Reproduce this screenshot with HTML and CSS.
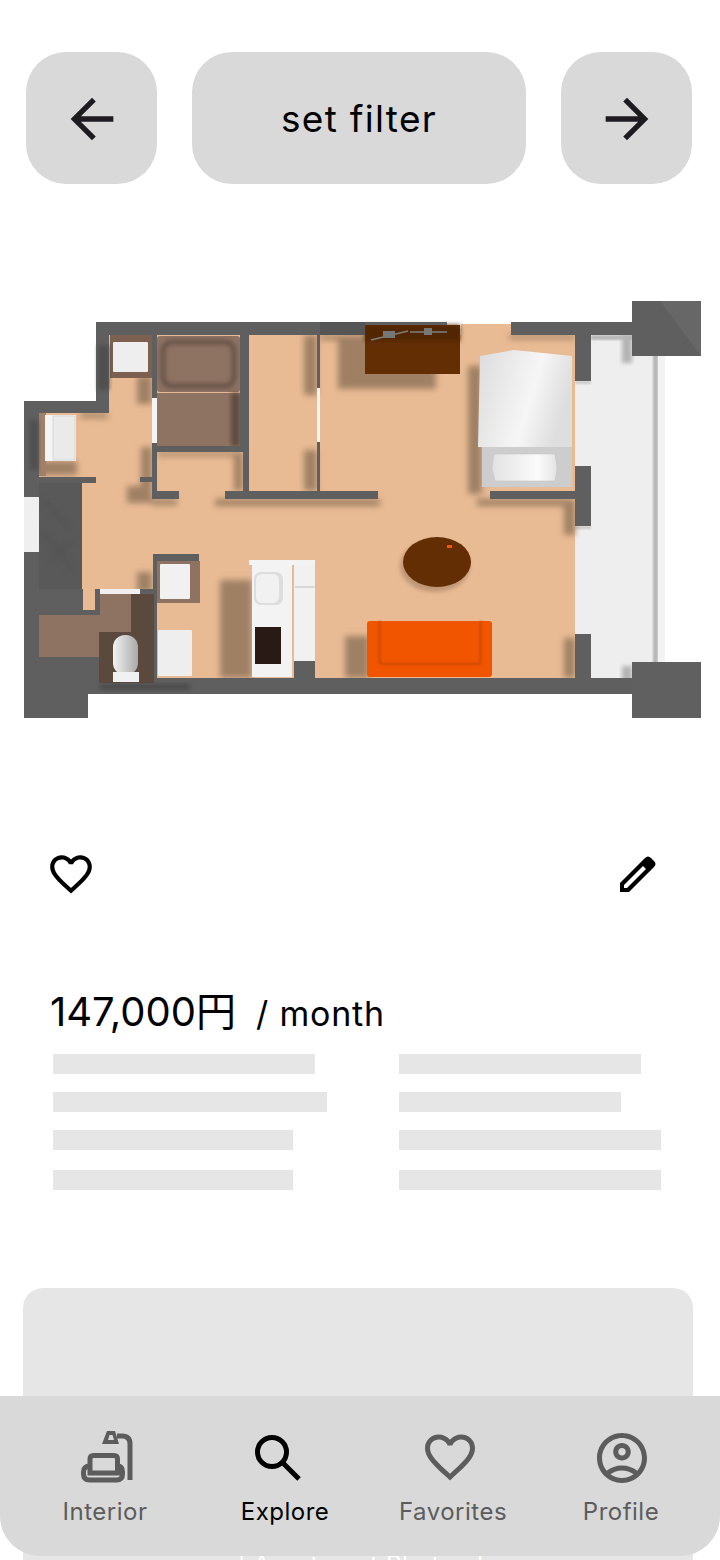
FILE: index.html
```html
<!DOCTYPE html>
<html lang="en">
<head>
<meta charset="utf-8">
<title>Explore</title>
<link rel="stylesheet" href="styles.css">
</head>
<body>
<div class="app">
  <header class="top">
    <button class="btn btn-square" aria-label="Back">
      <svg class="arrow" viewBox="0 0 24 24"><path d="M20 11H7.83l5.59-5.59L12 4l-8 8 8 8 1.41-1.41L7.83 13H20v-2z"/></svg>
    </button>
    <button class="btn btn-wide">set filter</button>
    <button class="btn btn-square" aria-label="Next">
      <svg class="arrow" viewBox="0 0 24 24"><path d="M12 4l-1.41 1.41L16.17 11H4v2h12.17l-5.58 5.59L12 20l8-8z"/></svg>
    </button>
  </header>

  <svg class="plan" viewBox="0 290 720 440" role="img" aria-label="Floor plan">
    <defs>
      <filter id="b3" x="-40%" y="-40%" width="180%" height="180%"><feGaussianBlur stdDeviation="3"/></filter>
      <filter id="b2" x="-30%" y="-30%" width="160%" height="160%"><feGaussianBlur stdDeviation="2"/></filter>
      <filter id="b1" x="-20%" y="-20%" width="140%" height="140%"><feGaussianBlur stdDeviation="0.8"/></filter>
      <linearGradient id="bedg" x1="0" x2="1" y1="0" y2="0.3"><stop offset="0" stop-color="#dcdcdc"/><stop offset="0.65" stop-color="#f6f6f6"/><stop offset="1" stop-color="#dedede"/></linearGradient>
      <linearGradient id="pillow" x1="0" x2="1"><stop offset="0" stop-color="#e2e2e2"/><stop offset="0.7" stop-color="#fbfbfb"/><stop offset="1" stop-color="#e4e4e4"/></linearGradient>
      <linearGradient id="toilet" x1="0" x2="1"><stop offset="0" stop-color="#f2f2f2"/><stop offset="1" stop-color="#a9a9a9"/></linearGradient>
    </defs>

    <!-- balcony -->
    <rect x="575" y="335" width="90" height="349" fill="#eeeeee"/>
    <rect x="653" y="345" width="5" height="325" fill="#b5b5b5" filter="url(#b1)"/>
    <rect x="658" y="356" width="7" height="306" fill="#f3f3f3"/>
    <rect x="591" y="335" width="62" height="5" fill="#b8b8b8" filter="url(#b1)"/>
    <rect x="622" y="335" width="10" height="28" fill="#b3b3b3" filter="url(#b2)"/>
    <rect x="622" y="666" width="10" height="16" fill="#b3b3b3" filter="url(#b2)"/>
    <rect x="575" y="381" width="16" height="3" fill="#c9c9c9" filter="url(#b1)"/>
    <rect x="575" y="526" width="16" height="3" fill="#c9c9c9" filter="url(#b1)"/>

    <!-- floor -->
    <path fill="#e9bb94" d="M109 335H575V678H157V590H82V483H39V413H109Z"/>
    <rect x="461" y="324" width="50" height="12" fill="#e9bb94"/>
    <rect x="83" y="589" width="14" height="22" fill="#e9bb94"/>

    <!-- cast shadows -->
    <g fill="#9f8064" filter="url(#b3)">
      <rect x="137" y="376" width="15" height="28"/>
      <rect x="141" y="447" width="11" height="56"/>
      <rect x="127" y="486" width="25" height="17"/>
      <rect x="304" y="335" width="13" height="60"/>
      <rect x="304" y="450" width="13" height="41"/>
      <rect x="234" y="452" width="9" height="39"/>
      <rect x="157" y="452" width="86" height="4"/>
      <rect x="215" y="499" width="165" height="7"/>
      <rect x="152" y="499" width="25" height="6"/>
      <rect x="338" y="335" width="98" height="54"/>
      <rect x="468" y="366" width="14" height="128"/>
      <rect x="477" y="499" width="98" height="7"/>
      <rect x="564" y="499" width="11" height="36"/>
      <rect x="564" y="638" width="11" height="40"/>
      <rect x="345" y="636" width="24" height="42"/>
      <rect x="137" y="572" width="15" height="20"/>
      <rect x="220" y="580" width="32" height="98"/>
      <rect x="320" y="335" width="18" height="5"/>
      <rect x="509" y="335" width="66" height="4"/>
      <rect x="39" y="461" width="38" height="14"/>
      <rect x="80" y="413" width="28" height="5"/>
    </g>
    <rect x="39" y="413" width="7" height="63" fill="#a08066"/>
    <ellipse cx="435" cy="566" rx="35" ry="26" fill="#bd9674" filter="url(#b2)"/>

    <!-- entry stone, windows -->
    <rect x="39" y="483" width="43" height="106" fill="#595959"/>
    <path d="M45 500l25 30M50 560l25-20M42 530l30 40" stroke="#525252" stroke-width="4" fill="none" filter="url(#b3)"/>
    <rect x="24" y="497" width="15" height="55" fill="#efefef"/>

    <!-- wardrobe & sink -->
    <rect x="110" y="335" width="42" height="43" fill="#7c6150"/>
    <rect x="113" y="342" width="35" height="30" rx="1" fill="#eeeeee"/>
    <rect x="45" y="415" width="31" height="46" fill="#f4f4f4"/>
    <rect x="53" y="416" width="22" height="44" fill="#eaeaea" stroke="#d6d6d6"/>

    <!-- bath -->
    <rect x="157" y="336" width="83" height="56" rx="3" fill="#8e7262"/>
    <rect x="163" y="342" width="71" height="44" rx="9" fill="none" stroke="#67524a" stroke-width="5" filter="url(#b2)"/>
    <rect x="157" y="393" width="83" height="53" fill="#8e7262"/>
    <rect x="231" y="393" width="9" height="53" fill="#5f4b3f" filter="url(#b2)"/>

    <!-- washroom -->
    <rect x="99" y="594" width="55" height="89" fill="#5c493e"/>
    <rect x="39" y="615" width="60" height="42" fill="#8e7262"/>
    <rect x="99" y="594" width="32" height="38" fill="#8e7262"/>
    <rect x="113" y="635" width="25" height="40" rx="12" fill="url(#toilet)"/>
    <rect x="113" y="672" width="26" height="10" fill="#f1f1f1"/>
    <rect x="100" y="589" width="40" height="5" fill="#f0f0f0"/>

    <!-- storage & laundry -->
    <rect x="157" y="561" width="43" height="42" fill="#8e7262"/>
    <rect x="160" y="564" width="30" height="35" rx="1" fill="#f1f1f1"/>
    <rect x="158" y="630" width="34" height="46" rx="1" fill="#eeeeee"/>

    <!-- kitchen -->
    <rect x="249" y="560" width="66" height="5" fill="#f3f3f3"/>
    <rect x="252" y="565" width="40" height="112" fill="#f3f3f3"/>
    <rect x="294" y="565" width="21" height="96" fill="#f1f1f1"/>
    <rect x="295" y="586" width="20" height="2" fill="#d8d8d8"/>
    <rect x="254" y="572" width="29" height="33" rx="7" fill="#dddddd"/>
    <rect x="256" y="574" width="23" height="29" rx="6" fill="#f1f1f1"/>
    <rect x="255" y="627" width="26" height="37" fill="#2a1a15"/>

    <!-- furniture -->
    <rect x="365" y="325" width="95" height="49" fill="#642e05"/>
    <rect x="365" y="325" width="95" height="16" fill="#512504" filter="url(#b2)"/>
    <path d="M371 340L408 331M410 332H447" stroke="#7d7d7d" stroke-width="1.5" fill="none"/>
    <rect x="383" y="331" width="12" height="7" fill="#777"/>
    <rect x="424" y="328" width="8" height="7" fill="#777"/>

    <path d="M482 487V447H572V487Z" fill="#cdcdcd"/>
    <path d="M480 356L514 350L572 356V447H478Z" fill="url(#bedg)"/>
    <path d="M494 454H555L557 468L555 481H495L492 468Z" fill="url(#pillow)" stroke="#c8c8c8" stroke-width="0.6"/>

    <ellipse cx="437" cy="562" rx="34" ry="25" fill="#642e05"/>
    <rect x="447" y="545" width="5" height="3" fill="#f25500"/>

    <rect x="367" y="621" width="125" height="56" rx="3" fill="#f25500"/>
    <path d="M379.500 621V661Q379.500 664 383 664H478Q480.500 664 480.500 661V621" fill="none" stroke="#c54805" stroke-width="2" filter="url(#b1)"/>

    <!-- walls -->
    <path fill="#5f5f5f" fill-rule="evenodd" d="M96 322H447V325H320V335H249V491H317V335H320V491H378V499H225V491H243V452H157V491H179V499H152V477H140V482H152V398H157V446H240V335H157V398H152V335H109V413H39V477H96V483H39V497H24V401H96Z"/>
    <path fill="#5f5f5f" d="M511 322H632V335H591V381H575V335H511Z"/>
    <rect x="575" y="466" width="16" height="60" fill="#5f5f5f"/>
    <rect x="490" y="491" width="85" height="8" fill="#5f5f5f"/>
    <rect x="575" y="634" width="16" height="44" fill="#5f5f5f"/>
    <path fill="#5f5f5f" d="M24 552H39V589H83V610H95V589H100V594H140V589H153V554H199V561H157V678H294V661H315V678H632V694H88V718H24ZM39 615V657H99V683H154V594H100V615Z"/>
    <rect x="317" y="442" width="3" height="49" fill="#5f5f5f"/>
    <rect x="317" y="388" width="3" height="54" fill="#f4f4f4"/>
    <rect x="152" y="398" width="5" height="45" fill="#f4f4f4"/>
    <rect x="320" y="322" width="45" height="13" fill="#555555"/>
    <rect x="98" y="345" width="11" height="45" fill="#4f4f4f" filter="url(#b2)"/>
    <rect x="30" y="420" width="8" height="50" fill="#4f4f4f" filter="url(#b2)"/>
    <rect x="100" y="684" width="90" height="6" fill="#4c4c4c" filter="url(#b2)"/>
    <rect x="632" y="301" width="69" height="55" fill="#5f5f5f"/>
    <path d="M660 301H701V356Z" fill="#676767"/>
    <rect x="632" y="662" width="69" height="56" fill="#606060"/>
    <rect x="591" y="684" width="41" height="10" fill="#5f5f5f"/>
  </svg>

  <div class="actions">
    <svg class="icon-heart" viewBox="0 0 24 24"><path d="M16.500 3c-1.740 0-3.410.810-4.500 2.090C10.910 3.810 9.240 3 7.500 3 4.420 3 2 5.420 2 8.500c0 3.780 3.400 6.860 8.550 11.540L12 21.350l1.450-1.320C18.600 15.360 22 12.280 22 8.500 22 5.420 19.580 3 16.500 3zm-4.400 15.550l-.1.100-.1-.100C7.140 14.240 4 11.390 4 8.500 4 6.500 5.500 5 7.500 5c1.540 0 3.040.990 3.570 2.360h1.870C13.460 5.990 14.960 5 16.500 5c2 0 3.500 1.500 3.500 3.500 0 2.890-3.140 5.740-7.900 10.050z"/></svg>
    <svg class="icon-edit" viewBox="0 0 44 44"><path fill-rule="evenodd" d="M4 40V31L29 6Q32 3 35 6L38 9Q41 12 38 15L13 40ZM8 36V33L27 14L30 17L11 36Z"/></svg>
  </div>

  <p class="price"><span class="amount">147,000円</span><span class="period">/ month</span></p>

  <div class="details">
    <div class="col">
      <div class="bar w262"></div>
      <div class="bar w274"></div>
      <div class="bar w240"></div>
      <div class="bar w240"></div>
    </div>
    <div class="col">
      <div class="bar w242"></div>
      <div class="bar w222"></div>
      <div class="bar w262"></div>
      <div class="bar w262"></div>
    </div>
  </div>

  <section class="photos">| Apartment Photos |</section>

  <nav class="nav">
    <a class="nav-item">
      <svg class="nav-icon" viewBox="0 0 60 60">
        <g transform="translate(3 0)">
          <g fill="none" stroke="currentColor" stroke-width="5">
            <path d="M12 38V31Q12 27.500 15.500 27.500H36Q39.500 27.500 39.500 31V38"/>
            <path d="M12 38Q5.500 38 5.500 44V46Q5.500 52 11.500 52H38.500Q44.500 52 44.500 46V44Q44.500 38 39.500 38"/>
            <path d="M12 38V45H39.500V38"/>
            <path d="M39 8H44Q52 8 52 16V52"/>
          </g>
          <path fill="currentColor" fill-rule="evenodd" d="M24 16L29 3H37L41 16ZM30 12H36L34.500 7H31.500Z"/>
        </g>
      </svg>
      <span>Interior</span>
    </a>
    <a class="nav-item active">
      <svg class="nav-icon" viewBox="0 0 60 60"><g fill="none" stroke="currentColor" stroke-width="5"><circle cx="17" cy="24" r="14.500"/><path d="M27.500 34.500L44 51"/></g></svg>
      <span>Explore</span>
    </a>
    <a class="nav-item">
      <svg class="nav-icon icon-fav" viewBox="0 0.400 24 24"><path fill="currentColor" d="M16.500 3c-1.740 0-3.410.810-4.500 2.090C10.910 3.810 9.240 3 7.500 3 4.420 3 2 5.420 2 8.500c0 3.780 3.400 6.860 8.550 11.540L12 21.350l1.450-1.320C18.600 15.360 22 12.280 22 8.500 22 5.420 19.580 3 16.500 3zm-4.400 15.550l-.1.100-.1-.100C7.140 14.240 4 11.390 4 8.500 4 6.500 5.500 5 7.500 5c1.540 0 3.040.990 3.570 2.360h1.870C13.460 5.990 14.960 5 16.500 5c2 0 3.500 1.500 3.500 3.500 0 2.890-3.140 5.740-7.900 10.050z"/></svg>
      <span>Favorites</span>
    </a>
    <a class="nav-item">
      <svg class="nav-icon icon-profile" viewBox="0 0 24 24"><path fill="currentColor" d="M12 2C6.480 2 2 6.480 2 12s4.480 10 10 10 10-4.480 10-10S17.520 2 12 2zM7.350 18.500C8.660 17.560 10.260 17 12 17s3.340.560 4.650 1.500C15.340 19.440 13.740 20 12 20s-3.340-.560-4.650-1.500zm10.790-1.380C16.450 15.800 14.320 15 12 15s-4.450.800-6.140 2.120C4.700 15.730 4 13.950 4 12c0-4.420 3.580-8 8-8s8 3.580 8 8c0 1.950-.700 3.730-1.860 5.120z"/><path fill="currentColor" d="M12 6c-1.930 0-3.500 1.570-3.500 3.500S10.070 13 12 13s3.500-1.570 3.500-3.500S13.930 6 12 6zm0 5c-.830 0-1.500-.670-1.500-1.500S11.170 8 12 8s1.500.670 1.500 1.500S12.830 11 12 11z"/></svg>
      <span>Profile</span>
    </a>
  </nav>
</div>
</body>
</html>
```
FILE: styles.css
```css
* { box-sizing: border-box; }
html, body { margin: 0; padding: 0; background: #fff; }
body { font-family: Inter, "Noto Sans CJK JP", sans-serif; color: #000; }
.app { position: relative; width: 720px; height: 1560px; overflow: hidden; }

.top { display: flex; gap: 35px; padding: 52px 28px 0 26px; }
.btn {
  display: flex; align-items: center; justify-content: center;
  height: 132px; border: 0; border-radius: 40px; background: #d9d9d9;
  font: 400 37px Inter, sans-serif; letter-spacing: 1.3px; color: #000; padding: 2px 0 0;
}
.btn-square { width: 131px; }
.btn-wide { width: 334px; padding: 0; }
.arrow { width: 64px; height: 64px; fill: #1d1b20; display: block; }

.plan { display: block; width: 720px; height: 440px; margin-top: 106px; }

.actions { display: flex; justify-content: space-between; margin-top: 119px; padding: 0 60px 0 46px; height: 50px; }
.icon-heart { width: 50px; height: 50px; display: block; }
.icon-edit { width: 44px; height: 44px; margin-top: 3px; display: block; }

.price { margin: 89px 0 18px; padding-left: 50px; height: 48px; line-height: 48px; display: flex; align-items: baseline; gap: 20px; }
.amount { font-size: 40px; }
.period { font-size: 34px; letter-spacing: 0.8px; }

.details { display: grid; grid-template-columns: 346px 1fr; padding-left: 53px; }
.col { display: flex; flex-direction: column; gap: 18px; }
.bar { height: 20px; background: #e6e6e6; }
.bar:last-child { margin-top: 2px; }
.w222 { width: 222px; }
.w240 { width: 240px; }
.w242 { width: 242px; }
.w262 { width: 262px; }
.w274 { width: 274px; }

.photos {
  width: 670px; height: 300px; margin: 98px 0 0 23px; padding: 262px 0 0 6px;
  background: #e6e6e6; border-radius: 20px;
  color: #fff; font-size: 24px; line-height: 30px; letter-spacing: 0.65px; text-align: center;
}

.nav {
  position: absolute; left: 0; right: 0; bottom: 4px; height: 160px;
  display: grid; grid-template-columns: 168px 192px 144px 192px; padding: 32px 0 0 21px;
  background: #d9d9d9; border-radius: 0 0 40px 40px;
}
.nav-item { display: flex; flex-direction: column; align-items: center; color: #5c5c5c; font-size: 24px; line-height: 30px; letter-spacing: 0.5px; }
.nav-item.active { color: #000; }
.nav-icon { width: 60px; height: 60px; display: block; margin-bottom: 9px; }
.icon-fav { margin-right: 6px; }
.icon-profile { margin-left: 2px; }
```
